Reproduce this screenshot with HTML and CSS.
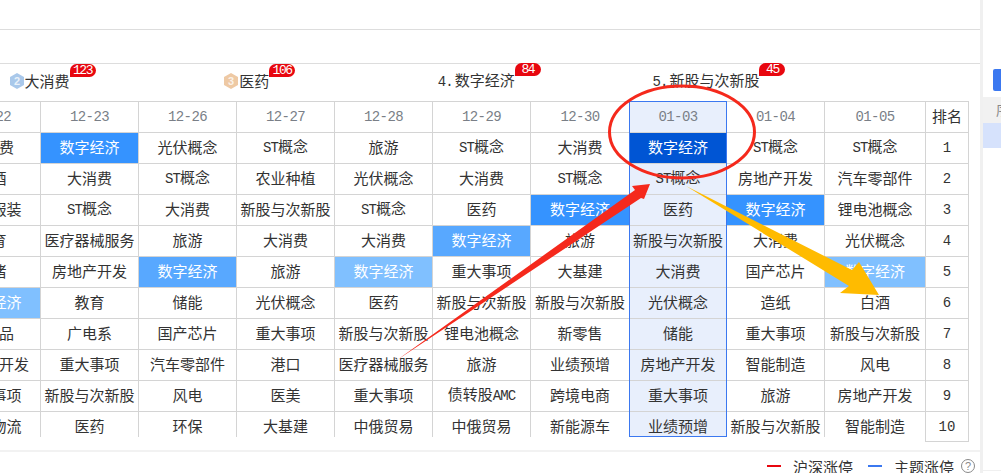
FILE: index.html
```html
<!DOCTYPE html>
<html lang="zh">
<head>
<meta charset="utf-8">
<title>涨停题材</title>
<link rel="stylesheet" href="styles.css">
</head>
<body>
<div class="page">
  <main class="main">
    <div class="top-blank"></div>
    <div class="sub-blank"></div>
    <div class="themes">
      <div class="theme"><svg class="medal" viewBox="0 0 16 16"><polygon points="8,0 15,4 15,12 8,16 1,12 1,4" fill="#a9c8ea"/><text x="8" y="12" class="medal-n">2</text></svg><span class="theme-name">大消费<b class="badge">123</b></span></div>
      <div class="theme"><svg class="medal" viewBox="0 0 16 16"><polygon points="8,0 15,4 15,12 8,16 1,12 1,4" fill="#eec9a4"/><text x="8" y="12" class="medal-n">3</text></svg><span class="theme-name">医药<b class="badge">106</b></span></div>
      <div class="theme"><span class="theme-name"><span class="latin num">4.</span>数字经济<b class="badge">84</b></span></div>
      <div class="theme"><span class="theme-name"><span class="latin num">5.</span>新股与次新股<b class="badge">45</b></span></div>
    </div>
    <div class="board">
      <div class="scroller">
        <table class="grid">
          <colgroup><col class="c98"><col class="c98"><col class="c98"><col class="c98"><col class="c98"><col class="c98"><col class="c99"><col class="c97"><col class="c98"><col class="c101"></colgroup>
          <tr class="head"><th>12-22</th><th>12-23</th><th>12-26</th><th>12-27</th><th>12-28</th><th>12-29</th><th>12-30</th><th class="cur">01-03</th><th>01-04</th><th>01-05</th></tr>
          <tr><td>大消费</td><td class="hot">数字经济</td><td>光伏概念</td><td><span class="latin">ST</span>概念</td><td>旅游</td><td><span class="latin">ST</span>概念</td><td>大消费</td><td class="top">数字经济</td><td><span class="latin">ST</span>概念</td><td><span class="latin">ST</span>概念</td></tr>
          <tr><td>白酒</td><td>大消费</td><td><span class="latin">ST</span>概念</td><td>农业种植</td><td>光伏概念</td><td>大消费</td><td><span class="latin">ST</span>概念</td><td class="cur"><span class="latin">ST</span>概念</td><td>房地产开发</td><td>汽车零部件</td></tr>
          <tr><td>纺织服装</td><td><span class="latin">ST</span>概念</td><td>大消费</td><td>新股与次新股</td><td><span class="latin">ST</span>概念</td><td>医药</td><td class="hot">数字经济</td><td class="cur">医药</td><td class="hot">数字经济</td><td>锂电池概念</td></tr>
          <tr><td>教育</td><td>医疗器械服务</td><td>旅游</td><td>大消费</td><td>大消费</td><td class="warm">数字经济</td><td>旅游</td><td class="cur">新股与次新股</td><td>大消费</td><td>光伏概念</td></tr>
          <tr><td>养猪</td><td>房地产开发</td><td class="warm">数字经济</td><td>旅游</td><td class="mild">数字经济</td><td>重大事项</td><td>大基建</td><td class="cur">大消费</td><td>国产芯片</td><td class="mild">数字经济</td></tr>
          <tr><td class="mild">数字经济</td><td>教育</td><td>储能</td><td>光伏概念</td><td>医药</td><td>新股与次新股</td><td>新股与次新股</td><td class="cur">光伏概念</td><td>造纸</td><td>白酒</td></tr>
          <tr><td>农产品</td><td>广电系</td><td>国产芯片</td><td>重大事项</td><td>新股与次新股</td><td>锂电池概念</td><td>新零售</td><td class="cur">储能</td><td>重大事项</td><td>新股与次新股</td></tr>
          <tr><td>房地产开发</td><td>重大事项</td><td>汽车零部件</td><td>港口</td><td>医疗器械服务</td><td>旅游</td><td>业绩预增</td><td class="cur">房地产开发</td><td>智能制造</td><td>风电</td></tr>
          <tr><td>重大事项</td><td>新股与次新股</td><td>风电</td><td>医美</td><td>重大事项</td><td>债转股<span class="latin">AMC</span></td><td>跨境电商</td><td class="cur">重大事项</td><td>旅游</td><td>房地产开发</td></tr>
          <tr><td>冷链物流</td><td>医药</td><td>环保</td><td>大基建</td><td>中俄贸易</td><td>中俄贸易</td><td>新能源车</td><td class="cur">业绩预增</td><td>新股与次新股</td><td>智能制造</td></tr>
        </table>
        <div class="cur-frame"></div>
      </div>
      <table class="rank">
        <tr class="head"><th>排名</th></tr>
        <tr><td>1</td></tr><tr><td>2</td></tr><tr><td>3</td></tr><tr><td>4</td></tr><tr><td>5</td></tr><tr><td>6</td></tr><tr><td>7</td></tr><tr><td>8</td></tr><tr><td>9</td></tr><tr><td class="last">10</td></tr>
      </table>
    </div>
    <div class="legend">
      <i class="dash dash-red"></i><span class="legend-text">沪深涨停</span>
      <i class="dash dash-blue"></i><span class="legend-text">主题涨停</span>
      <span class="help">?</span>
    </div>
  </main>
  <div class="gutter"></div>
  <aside class="side">
    <div class="side-btn"></div>
    <div class="side-head">序</div>
    <div class="side-row"></div>
    <div class="side-foot"></div>
  </aside>
  <svg class="marks" viewBox="0 0 1001 473">
    <ellipse cx="682" cy="132" rx="72.500" ry="46" fill="none" stroke="#f5291c" stroke-width="3"/>
    <polygon points="650,184 632,186 635,190 397,360 641,198 644,199" fill="#f5291c"/>
    <polygon points="686,186 852,270 859,262 879,295 840,293 849,286" fill="#ffbb00"/>
  </svg>
</div>
</body>
</html>
```
FILE: styles.css
```css
* { box-sizing: border-box; }
html, body { margin: 0; height: 100%; overflow: hidden; background: #fff; }
body { font: 15px/1 "Noto Sans CJK SC", sans-serif; color: #333; }
.page { position: relative; display: flex; width: 1001px; height: 473px; overflow: hidden; }
.main { flex: 0 0 980px; min-width: 0; }
.top-blank { height: 30px; border-bottom: 1px solid #ddd; }
.sub-blank { height: 34px; border-bottom: 1px solid #ddd; }
.themes { display: grid; grid-template-columns: repeat(4, 214.67px); height: 37px; padding-left: 8.5px; }
.theme { display: flex; align-items: center; height: 100%; padding-bottom: 4px; }
.medal { width: 16px; height: 16px; flex: none; }
.medal-n { font: bold 11px "Liberation Sans", sans-serif; fill: #fff; text-anchor: middle; opacity: .75; }
.theme-name { position: relative; white-space: nowrap; }
.latin { font-family: "Liberation Mono", monospace; font-size: 14px; letter-spacing: -.9px; }
.num { display: inline-block; width: 17px; }
.badge { position: absolute; left: 100%; top: -9px; width: 26px; height: 13px; border-radius: 7px 7px 7px 0; background: #e8070f; color: #fff; font: 13px/13px "Liberation Mono", monospace; letter-spacing: -1.4px; text-align: center; }
.board { display: flex; height: 341px; align-items: flex-start; }
.scroller { position: relative; flex: 0 0 925px; height: 336px; overflow: hidden; }
table { border-collapse: separate; border-spacing: 0; table-layout: fixed; }
.grid { width: 983px; margin-left: -57px; border-top: 1px solid #d4d4d4; }
.rank { width: 44px; border-top: 1px solid #d4d4d4; border-left: 1px solid #d4d4d4; }
.c97 { width: 97px; } .c98 { width: 98px; } .c99 { width: 99px; } .c101 { width: 101px; }
th, td { height: 31px; padding: 0; border-right: 1px solid #d4d4d4; border-bottom: 1px solid #d4d4d4; text-align: center; font-weight: 400; white-space: nowrap; overflow: hidden; }
.grid td { padding-bottom: 4px; }
.head th { font-family: "Liberation Mono", monospace; font-size: 14px; letter-spacing: -.6px; color: #7a7f87; }
.rank .head th { font-family: "Noto Sans CJK SC", sans-serif; font-size: 15px; letter-spacing: 0; color: #333; padding-bottom: 3px; }
.rank td { font-family: "Liberation Mono", monospace; font-size: 14px; }
.rank .last { height: 30px; }
.cur { background: #e8effc; }
.hot { background: #3593ff; color: #fff; }
.warm { background: #58a8ff; color: #fff; }
.mild { background: #80c0ff; color: #fff; }
.top { background: #0055d4; color: #fff; }
.cur-frame { position: absolute; left: 629px; top: 0; width: 98px; height: 336px; border: 1px solid #3b78f0; }
.legend { display: flex; align-items: center; justify-content: flex-end; height: 30px; margin-top: 8px; border-top: 2px solid #f2f2f2; padding-right: 5px; }
.dash { width: 14px; height: 2px; margin-right: 12px; }
.dash-red { background: #e8070f; }
.dash-blue { background: #3b78f0; }
.legend-text { margin-right: 15px; padding-top: 1px; }
.legend-text:nth-of-type(2) { margin-right: 7px; }
.help { width: 14px; height: 14px; border: 1px solid #888; border-radius: 50%; color: #888; font: 11px/12px "Liberation Sans", sans-serif; text-align: center; }
.gutter { flex: 0 0 3px; background: #f0f0f0; }
.side { flex: 1; padding-top: 69px; overflow: hidden; }
.side-btn { width: 12px; height: 22px; margin-left: 10px; background: #3b78f0; border-radius: 2px; }
.side-head { height: 26px; margin-top: 6px; padding: 5px 0 0 13px; background: #f1f1f1; color: #888; font-size: 14px; }
.side-row { height: 25px; background: #d6e2fc; }
.side-foot { height: 1px; margin-top: 322px; background: #f0f0f0; }
.marks { position: absolute; inset: 0; width: 1001px; height: 473px; pointer-events: none; }
```
